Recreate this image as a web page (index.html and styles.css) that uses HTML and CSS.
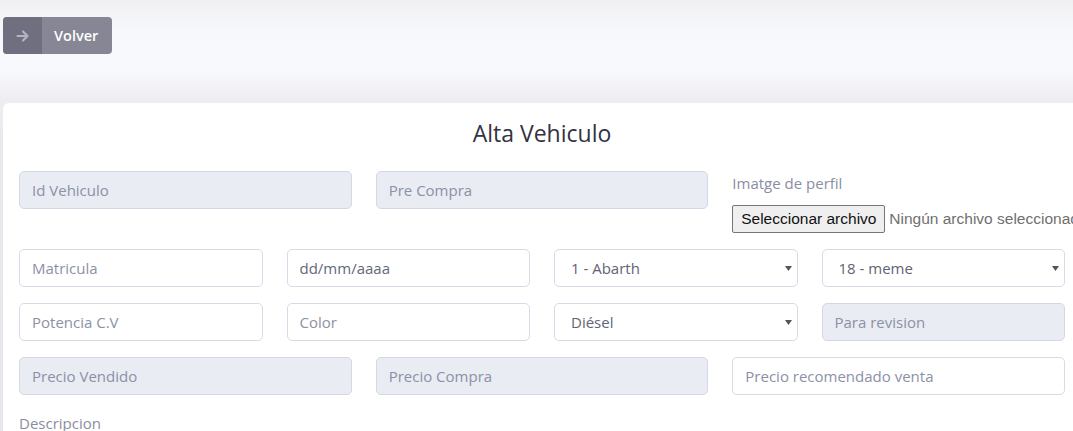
FILE: index.html
```html
<!DOCTYPE html>
<html lang="es">
<head>
<meta charset="utf-8">
<title>Alta Vehiculo</title>
<link rel="stylesheet" href="styles.css">
</head>
<body>
<div class="top">
  <a class="btn-back" href="#">
    <span class="btn-icon">
      <svg width="14" height="14" viewBox="0 0 14 14"><path d="M1.5 7h10M7 2.5 11.5 7 7 11.5" fill="none" stroke="#b4b4c0" stroke-width="2.2" stroke-linecap="round" stroke-linejoin="round"/></svg>
    </span>
    <span class="btn-text">Volver</span>
  </a>
</div>
<div class="card">
  <h3 class="title">Alta Vehiculo</h3>
  <form class="form">
    <div class="row row-3">
      <div class="group"><input class="control" placeholder="Id Vehiculo" disabled></div>
      <div class="group"><input class="control" placeholder="Pre Compra" disabled></div>
      <div class="group file-group">
        <label class="label">Imatge de perfil</label>
        <div class="file">
          <span class="file-btn">Seleccionar archivo</span>
          <span class="file-name">Ningún archivo seleccionado</span>
        </div>
      </div>
    </div>
    <div class="row row-4">
      <div class="group"><input class="control" placeholder="Matricula"></div>
      <div class="group"><input class="control value" value="dd/mm/aaaa"></div>
      <div class="group"><select class="control select"><option>1 - Abarth</option></select></div>
      <div class="group"><select class="control select"><option>18 - meme</option></select></div>
    </div>
    <div class="row row-4">
      <div class="group"><input class="control" placeholder="Potencia C.V"></div>
      <div class="group"><input class="control" placeholder="Color"></div>
      <div class="group"><select class="control select"><option>Diésel</option></select></div>
      <div class="group"><input class="control" placeholder="Para revision" disabled></div>
    </div>
    <div class="row row-3">
      <div class="group"><input class="control" placeholder="Precio Vendido" disabled></div>
      <div class="group"><input class="control" placeholder="Precio Compra" disabled></div>
      <div class="group"><input class="control" placeholder="Precio recomendado venta"></div>
    </div>
    <div class="group">
      <label class="label">Descripcion</label>
    </div>
  </form>
</div>
</body>
</html>
```

FILE: styles.css
```css
html, body {
  margin: 0;
  overflow: hidden;
}
body {
  width: 1073px;
  height: 431px;
  font-family: "Open Sans", "Lato", sans-serif;
  background: linear-gradient(#f0f0f3 0px, #f7f8fb 30px, #f8f9fc 70px, #eeeef2 100px, #e8e8ed 140px, #e6e6ec 431px);
}
.top {
  padding: 17px 0 0 3px;
  height: 37px;
}
.btn-back {
  display: inline-flex;
  height: 37px;
  width: 109px;
  border-radius: 4px;
  overflow: hidden;
  text-decoration: none;
  background: #868695;
}
.btn-icon {
  width: 39px;
  display: flex;
  align-items: center;
  justify-content: center;
  background: #6f6f80;
}
.btn-text {
  flex: 1;
  display: flex;
  align-items: center;
  padding-left: 12px;
  color: #ffffff;
  font-size: 14.5px;
  font-weight: 600;
}
.card {
  margin: 49px 0 0 3px;
  width: 1046px;
  padding: 0 16px;
  background: #ffffff;
  border-radius: 6px 0 0 0;
  height: 340px;
}
.title {
  margin: 0;
  padding-top: 14px;
  height: 68px;
  box-sizing: border-box;
  text-align: center;
  font-size: 23px;
  font-weight: 400;
  line-height: 33px;
  color: #32333f;
}
.row {
  display: grid;
  column-gap: 24px;
  width: 1046px;
  margin-bottom: 16px;
}
.row-3 { grid-template-columns: repeat(3, 1fr); }
.row-4 { grid-template-columns: repeat(4, 1fr); }
.group {
  min-width: 0;
}
.control {
  display: block;
  box-sizing: border-box;
  width: 100%;
  height: 38px;
  margin: 0;
  padding: 0 12px;
  font-family: inherit;
  font-size: 15px;
  color: #62677a;
  background: #ffffff;
  border: 1px solid #d8dae8;
  border-radius: 5px;
  outline: none;
}
.control::placeholder {
  color: #8c91a6;
  opacity: 1;
}
.control:disabled {
  background: #e9ecf3;
  border-color: #d4d8e4;
}
.select {
  appearance: none;
  -webkit-appearance: none;
  padding-left: 16px;
  color: #5f6476;
  background-image: url("data:image/svg+xml;utf8,<svg xmlns='http://www.w3.org/2000/svg' width='7' height='5'><path d='M0 0h7L3.5 5z' fill='%23555'/></svg>");
  background-repeat: no-repeat;
  background-position: right 5px center;
}
.label {
  display: block;
  font-size: 15px;
  line-height: 24px;
  color: #8a8e9f;
}
.file-group .label {
  margin-bottom: 10px;
}
.file {
  display: flex;
  align-items: center;
  white-space: nowrap;
  height: 28px;
}
.file-btn {
  box-sizing: border-box;
  flex: none;
  height: 28px;
  width: 153px;
  display: flex;
  align-items: center;
  justify-content: center;
  font-family: "Liberation Sans", Arial, sans-serif;
  font-size: 15.5px;
  color: #111111;
  background: #efefef;
  border: 1px solid #767676;
  border-radius: 2px;
}
.file-name {
  margin-left: 4px;
  font-family: "Liberation Sans", Arial, sans-serif;
  font-size: 15.5px;
  color: #6f6f6f;
}
```
